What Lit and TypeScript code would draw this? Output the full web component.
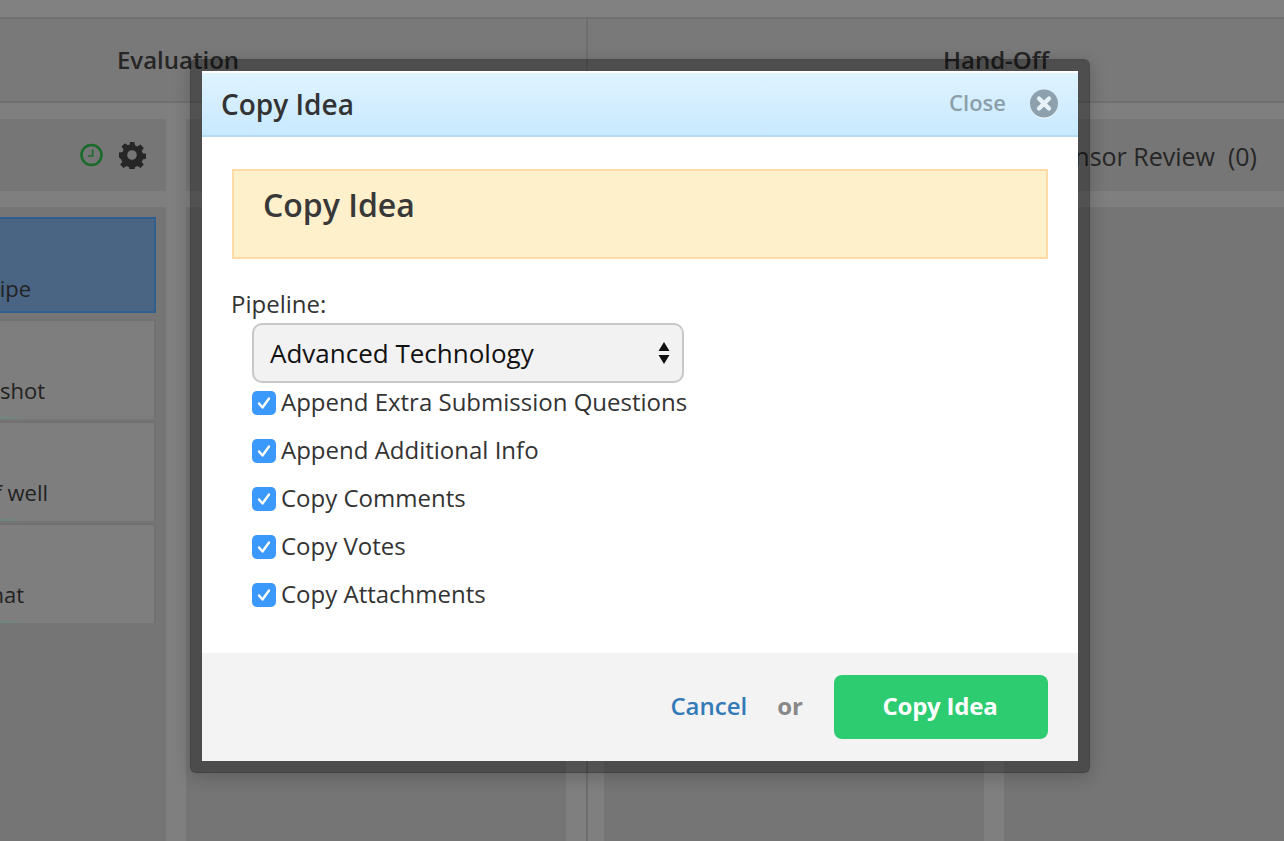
import { LitElement, html, css, svg } from "lit";
import { customElement } from "lit/decorators.js";

const CARDS = [
  { text: "ipe", end: 31, selected: true },
  { text: "shot", end: 45, selected: false },
  { text: "f well", end: 48, selected: false },
  { text: "what", end: 24, selected: false },
];
const OPTIONS = [
  "Append Extra Submission Questions",
  "Append Additional Info",
  "Copy Comments",
  "Copy Votes",
  "Copy Attachments",
];

const gear = svg`<svg class="gear" viewBox="0 0 28 28" width="28" height="28"><path fill="#262626" fill-rule="evenodd" d="M11.6 1h4.800l.7 3.600c.8.200 1.600.6 2.300 1l3-2.100 3.400 3.400-2.100 3c.4.700.8 1.500 1 2.300l3.600.7v4.800l-3.600.7c-.2.800-.6 1.600-1 2.300l2.100 3-3.400 3.400-3-2.100c-.7.400-1.500.8-2.300 1l-.7 3.600h-4.800l-.7-3.600c-.8-.2-1.600-.6-2.300-1l-3 2.100-3.400-3.400 2.100-3c-.4-.7-.8-1.500-1-2.300L1 16.400v-4.800l3.600-.7c.2-.8.6-1.600 1-2.300l-2.100-3 3.400-3.400 3 2.100c.7-.4 1.500-.8 2.300-1zM14 9.200a4.800 4.800 0 1 0 0 9.600 4.800 4.800 0 0 0 0-9.600z"/></svg>`;

const clock = svg`<svg class="clock" viewBox="0 0 24 24" width="24" height="24"><circle cx="11.500" cy="12" r="10" fill="none" stroke="#1a6a2a" stroke-width="2.600"/><path d="M12.700 6.500V13H8" fill="none" stroke="#1a6a2a" stroke-width="1.600"/></svg>`;

const closeIcon = svg`<svg viewBox="0 0 28 30" width="28" height="30"><circle cx="14" cy="15.500" r="14" fill="#f4fbff"/><circle cx="14" cy="14.500" r="14" fill="#8da0ad"/><path d="M9 9.500l10 10M19 9.500l-10 10" stroke="#e6f2f8" stroke-width="4.400" stroke-linecap="round"/></svg>`;

const tick = svg`<svg viewBox="0 0 24 24" width="24" height="24"><rect width="24" height="24" rx="5" fill="#3b99fc"/><path d="M7 12.500l3.500 4L17 7.500" fill="none" stroke="#fff" stroke-width="2.400" stroke-linecap="round" stroke-linejoin="round"/></svg>`;

@customElement("app-root")
export class AppRoot extends LitElement {
  static styles = css`
    :host {
      display: block;
      position: relative;
      width: 1284px;
      height: 841px;
      overflow: hidden;
      font-family: "Open Sans", "Liberation Sans", sans-serif;
      background: #7f7f7f;
      color: #222;
    }
    .board { display: flex; flex-direction: column; height: 841px; }
    .topstrip { height: 17px; flex: none; background: #818181; border-bottom: 2px solid #707070; }
    .stages { flex: 1; display: grid; grid-template-columns: 588px 1fr; min-height: 0; }
    .group { display: flex; flex-direction: column; min-height: 0; min-width: 0; }
    .group.first { border-right: 2px solid #6e6e6e; box-sizing: border-box; }
    .title {
      height: 84px; flex: none; box-sizing: border-box; background: #797979;
      border-bottom: 2px solid #6f6f6f; display: flex; justify-content: center;
      padding-top: 23px; line-height: 36px; font-size: 24px; font-weight: 600; color: #262626;
    }
    .first .title { padding-right: 230px; }
    .second .title { padding-left: 120px; }
    .cols { flex: 1; display: grid; column-gap: 20px; padding-top: 16px; min-height: 0; }
    .first .cols { grid-template-columns: 166px 380px; }
    .second .cols { grid-template-columns: 380px 1fr; padding-left: 16px; }
    .col { display: flex; flex-direction: column; gap: 16px; min-height: 0; min-width: 0; }
    .colhead {
      height: 72px; flex: none; box-sizing: border-box; background: #767676; display: flex; align-items: center;
      justify-content: flex-end; font-size: 25px; color: #262626; white-space: nowrap;
    }
    .colhead.icons { gap: 14px; padding-right: 20px; }
    .colhead.text { padding: 2px 27px 0 0; }
    .colbody { flex: 1; background: #757575; min-height: 0; }
    .cards { display: flex; flex-direction: column; gap: 2px; padding: 10px 10px 0 0; }
    .card {
      height: 100px; flex: none; box-sizing: border-box; overflow: hidden;
      background:
        linear-gradient(to right, #6c8a7c, rgba(108, 138, 124, 0) 25px) left bottom / 100% 2px no-repeat,
        #7e7e7e;
      border: 2px solid #717171; border-left: 0; border-bottom: 0; font-size: 22px; color: #222;
      display: flex; align-items: flex-end; justify-content: flex-end; padding-bottom: 14px;
      line-height: 30px; white-space: nowrap;
    }
    .card span { flex: none; }
    .card.selected {
      height: 96px; margin-bottom: 4px; background: #4a6583;
      border: 2px solid #2f5f8f; border-left: 0; padding-bottom: 8px;
    }
    .overlayframe {
      position: absolute; left: 190px; top: 59px; width: 900px; height: 714px;
      box-sizing: border-box; border: 12px solid rgba(0, 0, 0, 0.35); border-radius: 6px;
      background: #fff; background-clip: padding-box; display: flex; flex-direction: column;
      box-shadow: 0 4px 18px rgba(0, 0, 0, 0.2);
    }
    .modalhead {
      height: 66px; flex: none; box-sizing: border-box;
      background: linear-gradient(#dff3ff, #c8e9ff);
      border-top: 2px solid #fff; border-bottom: 2px solid #b4dcf5;
      display: flex; align-items: center; padding: 0 20px 0 19px;
      color: #333;
    }
    .modaltitle { font-size: 28px; font-weight: 600; flex: 1; line-height: 36px; }
    .closetxt { font-size: 22px; font-weight: 600; color: #8c9ea9; margin-right: 24px; padding-bottom: 4px; }
    .closebtn { display: flex; }
    .modalbody { flex: 1; padding: 32px 30px 0; display: flex; flex-direction: column; color: #333; }
    .notice {
      height: 90px; box-sizing: border-box; flex: none;
      background: #fff0cc; border: 2px solid #fddba6;
      padding: 12px 0 0 29px; font-size: 32px; font-weight: 600; line-height: 44px; color: #383838;
    }
    .plabel { font-size: 24px; line-height: 30px; margin: 30px 0 0 -1px; color: #333; }
    .selectbox {
      margin: 4px 0 0 20px; width: 432px; height: 60px; box-sizing: border-box; flex: none;
      background: #f2f2f2; border: 2px solid #c8c8c8; border-radius: 10px;
      display: flex; align-items: center; justify-content: space-between;
      padding: 0 12px 0 16px; font-size: 26px; color: #111;
    }
    .opts { display: flex; flex-direction: column; gap: 24px; margin: 8px 0 0 20px; }
    .opt { height: 24px; display: flex; align-items: center; gap: 5px; font-size: 24px; color: #333; white-space: nowrap; }
    .opt svg { flex: none; }
    .opt span { padding-bottom: 4px; }
    .modalfoot {
      height: 108px; flex: none; box-sizing: border-box; background: #f3f3f3;
      display: flex; align-items: center; justify-content: flex-end; padding: 0 30px 0 0;
      font-size: 24px; font-weight: 600;
    }
    .cancel { color: #337ab7; padding-bottom: 3px; }
    .or { color: #888; margin: 0 31px 0 30px; font-weight: 700; padding-bottom: 3px; }
    .copy {
      width: 214px; height: 64px; box-sizing: border-box; padding: 0 2px 3px 0; border-radius: 8px;
      background: #2ecc71; color: #fff; letter-spacing: -0.2px;
      display: flex; align-items: center; justify-content: center; font-weight: 700;
    }
  `;

  render() {
    return html`
      <div class="board">
        <div class="topstrip"></div>
        <div class="stages">
          <div class="group first">
            <div class="title">Evaluation</div>
            <div class="cols">
              <div class="col">
                <div class="colhead icons">${clock}${gear}</div>
                <div class="colbody cards">
                  ${CARDS.map(
                    (c) => html`<div class="card ${c.selected ? "selected" : ""}" style="padding-right:${154 - c.end}px"><span>${c.text}</span></div>`
                  )}
                </div>
              </div>
              <div class="col"><div class="colhead"></div><div class="colbody"></div></div>
            </div>
          </div>
          <div class="group second">
            <div class="title">Hand-Off</div>
            <div class="cols">
              <div class="col"><div class="colhead"></div><div class="colbody"></div></div>
              <div class="col"><div class="colhead text">Sponsor Review&nbsp;&nbsp;(0)</div><div class="colbody"></div></div>
            </div>
          </div>
        </div>
      </div>
      <div class="overlayframe">
        <div class="modalhead">
          <div class="modaltitle">Copy Idea</div>
          <div class="closetxt">Close</div>
          <div class="closebtn">${closeIcon}</div>
        </div>
        <div class="modalbody">
          <div class="notice">Copy Idea</div>
          <div class="plabel">Pipeline:</div>
          <div class="selectbox">
            <span>Advanced Technology</span>
            <svg viewBox="0 0 12 24" width="12" height="24"><path d="M6 1l5.500 9H.5zM6 23L.5 14h11z" fill="#111"/></svg>
          </div>
          <div class="opts">
            ${OPTIONS.map((o) => html`<div class="opt">${tick}<span>${o}</span></div>`)}
          </div>
        </div>
        <div class="modalfoot">
          <span class="cancel">Cancel</span>
          <span class="or">or</span>
          <div class="copy">Copy Idea</div>
        </div>
      </div>
    `;
  }
}
